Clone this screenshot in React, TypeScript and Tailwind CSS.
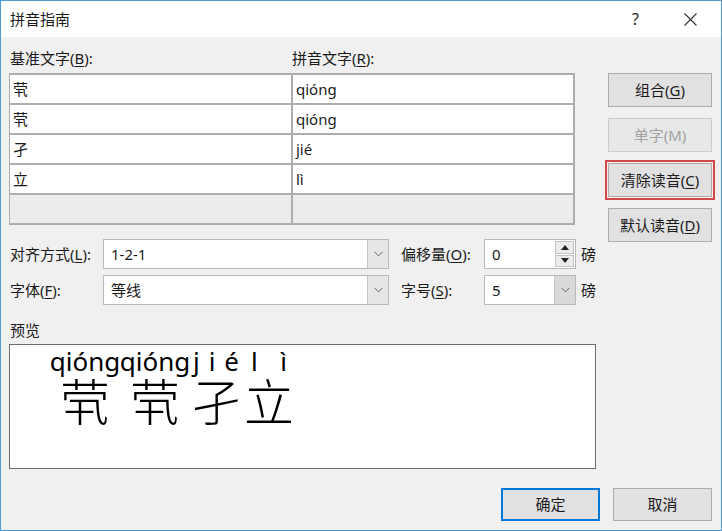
import React from 'react'

const font = { fontFamily: '"Noto Sans", "Noto Sans CJK SC", sans-serif' }

const rows = [
  { base: '茕', ruby: 'qióng' },
  { base: '茕', ruby: 'qióng' },
  { base: '孑', ruby: 'jié' },
  { base: '立', ruby: 'lì' },
  { base: '', ruby: '' },
]

const preview = [
  { py: ['qióng'], ch: '茕', w: 'w-[70px]', pw: '' },
  { py: ['qióng'], ch: '茕', w: 'w-[70px]', pw: '' },
  { py: ['j', 'i', 'é'], ch: '孑', w: 'w-[52px]', pw: 'w-[46px]' },
  { py: ['l', 'ì'], ch: '立', w: 'w-[54px]', pw: 'w-[36px]' },
]

function Chevron() {
  return (
    <svg width="9" height="6" viewBox="0 0 9 6" className="text-[#606060]">
      <path d="M0.5 0.8 L4.5 4.8 L8.5 0.8" fill="none" stroke="currentColor" strokeWidth="1" />
    </svg>
  )
}

function Combo({ value, width, darkButton }: { value: string; width: string; darkButton?: boolean }) {
  return (
    <div className={`flex h-[30px] ${width} border border-[#b9b9b9] bg-white`}>
      <div className="flex-1 flex items-center pl-[7px] text-[15px] text-[#1a1a1a]">{value}</div>
      <div className={`w-[21px] flex items-center justify-center border-l border-[#c4c4c4] ${darkButton ? 'bg-[#dadada]' : 'bg-[#e6e6e6]'}`}>
        <Chevron />
      </div>
    </div>
  )
}

function Spin({ value }: { value: string }) {
  return (
    <div className="flex h-[30px] w-[92px] border border-[#b9b9b9] bg-white">
      <div className="flex-1 flex items-center pl-[7px] text-[15px] text-[#1a1a1a]">{value}</div>
      <div className="w-[20px] flex flex-col py-[1px] pr-[1px] gap-[1px]">
        <div className="flex-1 flex items-center justify-center border border-[#c4c4c4] bg-[#ececec]">
          <svg width="8" height="5" viewBox="0 0 8 5"><path d="M0 5 L4 0 L8 5 Z" fill="#222" /></svg>
        </div>
        <div className="flex-1 flex items-center justify-center border border-[#c4c4c4] bg-[#ececec]">
          <svg width="8" height="5" viewBox="0 0 8 5"><path d="M0 0 L8 0 L4 5 Z" fill="#222" /></svg>
        </div>
      </div>
    </div>
  )
}

function Btn({ children, disabled, highlight }: { children: React.ReactNode; disabled?: boolean; highlight?: boolean }) {
  return (
    <button
      className={`h-[34px] w-[104px] flex items-center justify-center text-[15px] border ${
        disabled ? 'bg-[#e8e8e8] border-[#cbcbcb] text-[#a2a2a2]' : 'bg-[#e1e1e1] border-[#adadad] text-[#1a1a1a]'
      } ${highlight ? 'outline-2 outline-offset-1 outline-[#d04848]' : ''}`}
    >
      {children}
    </button>
  )
}

function U({ children }: { children: React.ReactNode }) {
  return <span className="underline underline-offset-2">{children}</span>
}

export default function App() {
  return (
    <div style={font} className="w-[722px] h-[531px] flex flex-col border border-[#4a9ad8] bg-[#f0f0f0] text-[#1a1a1a] overflow-hidden">
      <div className="h-[36px] bg-white flex items-center pl-[9px] shrink-0">
        <span className="text-[15px]">拼音指南</span>
        <span className="ml-auto text-[16px] text-[#222] mr-[45px]">?</span>
        <svg width="13" height="13" viewBox="0 0 13 13" className="mr-[24px]">
          <path d="M0.5 0.5 L12.5 12.5 M12.5 0.5 L0.5 12.5" stroke="#333" strokeWidth="1.1" />
        </svg>
      </div>

      <div className="flex-1 flex flex-col pl-[8px] pr-[9px]">
        <div className="flex">
          <div className="w-[590px] flex flex-col">
            <div className="flex h-[22px] mt-[10px] items-center text-[15px]">
              <span className="w-[283px] pl-[1px]">基准文字(<U>B</U>):</span>
              <span>拼音文字(<U>R</U>):</span>
            </div>
            <div className="mt-[4px] w-[566px] border-t-2 border-l border-[#adadad]">
              {rows.map((r, i) => (
                <div key={i} className={`flex h-[30px] ${i === rows.length - 1 ? 'bg-[#ececec]' : 'bg-white'}`}>
                  <div className="w-[283px] flex items-center pl-[3px] border-r-2 border-b-2 border-[#adadad] text-[15px]">
                    {r.base}
                  </div>
                  <div className="flex-1 flex items-center pl-[3px] border-r-2 border-b-2 border-[#adadad] text-[15px]">
                    {r.ruby}
                  </div>
                </div>
              ))}
            </div>

            <div className="flex items-center mt-[14px] h-[30px] text-[15px]">
              <span className="w-[94px] pl-[1px]">对齐方式(<U>L</U>):</span>
              <Combo value="1-2-1" width="w-[286px]" />
              <span className="ml-[12px] w-[83px]">偏移量(<U>O</U>):</span>
              <Spin value="0" />
              <span className="ml-[5px]">磅</span>
            </div>
            <div className="flex items-center mt-[6px] h-[30px] text-[15px]">
              <span className="w-[94px] pl-[1px]">字体(<U>F</U>):</span>
              <Combo value="等线" width="w-[286px]" />
              <span className="ml-[12px] w-[83px]">字号(<U>S</U>):</span>
              <Combo value="5" width="w-[92px]" darkButton />
              <span className="ml-[5px]">磅</span>
            </div>
          </div>

          <div className="ml-auto flex flex-col gap-[11px] pt-[36px]">
            <Btn>组合(<U>G</U>)</Btn>
            <Btn disabled>单字(M)</Btn>
            <Btn highlight>清除读音(<U>C</U>)</Btn>
            <Btn>默认读音(<U>D</U>)</Btn>
          </div>
        </div>

        <div className="mt-[15px] h-[20px] flex items-center pl-[1px] text-[15px]">预览</div>
        <div className="mt-[4px] w-[587px] h-[125px] border border-[#6e6e6e] bg-white flex items-start pl-[40px] pt-[2px]">
          <div className="flex">
            {preview.map((c, i) => (
              <div key={i} className={`${c.w} flex flex-col items-center`}>
                <div className={`h-[27px] flex items-end text-[26px] leading-none text-black ${c.pw} ${c.pw ? 'justify-between' : 'justify-center'}`}>
                  {c.py.map((p, j) => (
                    <span key={j}>{p}</span>
                  ))}
                </div>
                <div className="text-[50px] leading-[50px] text-black" style={{ fontFamily: '"Noto Sans CJK SC", sans-serif', fontWeight: 300 }}>
                  {c.ch}
                </div>
              </div>
            ))}
          </div>
        </div>

        <div className="mt-[19px] flex justify-end gap-[13px]">
          <button className="h-[33px] w-[99px] bg-[#e1e1e1] border-2 border-[#0078d7] text-[15px]">确定</button>
          <button className="h-[33px] w-[99px] bg-[#e1e1e1] border border-[#adadad] text-[15px]">取消</button>
        </div>
      </div>
    </div>
  )
}
